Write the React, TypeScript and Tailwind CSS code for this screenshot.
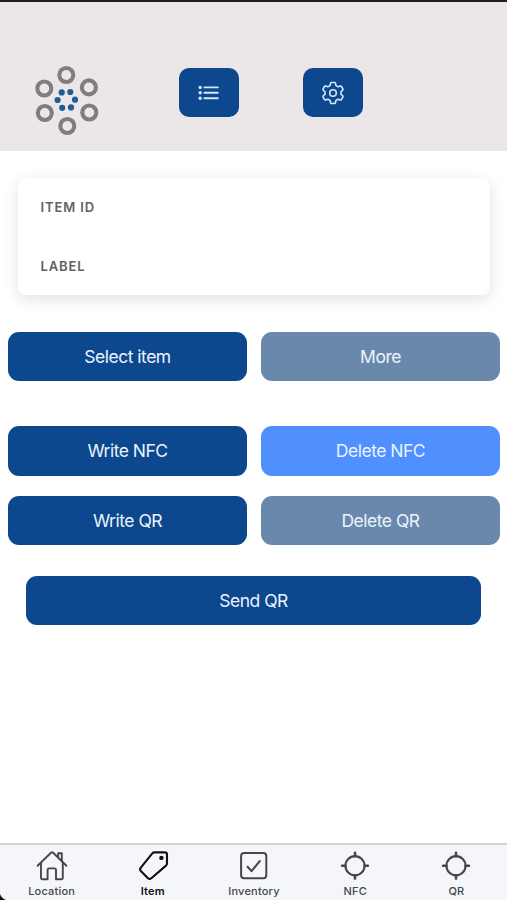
import React from "react";

const rings = [
  [66.3, 75],
  [88.9, 87.4],
  [89.3, 112.5],
  [67.3, 126],
  [44.8, 113],
  [44.3, 88.5],
];

const dots = [
  [61.7, 92.4],
  [70.3, 92],
  [75, 99.7],
  [71, 107.4],
  [62.2, 107.8],
  [57.6, 100],
];

// one tooth of the gear as [angle, radius], repeated every 60 degrees
const tooth = [
  [-20, 8.2],
  [-14, 10.2],
  [-9, 10.7],
  [9, 10.7],
  [14, 10.2],
  [20, 8.2],
  [30, 7.9],
];

const gearPoints = [0, 60, 120, 180, 240, 300]
  .flatMap((start) =>
    tooth.map(([angle, r]) => {
      const a = ((start + angle) * Math.PI) / 180;
      return `${(12 + r * Math.sin(a)).toFixed(2)},${(12 - r * Math.cos(a)).toFixed(2)}`;
    })
  )
  .join(" ");

function Logo() {
  return (
    <svg className="h-[72px] w-[66px]" viewBox="34 65 66 72" fill="none">
      {rings.map(([x, y]) => (
        <circle key={x} cx={x} cy={y} r="7" stroke="#7f7d7d" strokeWidth="4.1" />
      ))}
      {dots.map(([x, y]) => (
        <circle key={x} cx={x} cy={y} r="3.1" fill="#215c96" />
      ))}
    </svg>
  );
}

function ListIcon() {
  return (
    <svg className="h-4 w-[22px]" viewBox="0 0 22 16" fill="none" stroke="currentColor">
      <path d="M6.4 2.4h13.4M6.4 7.8h13.4M6.4 13.2h13.4" strokeWidth="1.9" strokeLinecap="round" />
      <g fill="currentColor" stroke="none">
        <circle cx="2.2" cy="2.4" r="1.7" />
        <circle cx="2.2" cy="7.8" r="1.7" />
        <circle cx="2.2" cy="13.2" r="1.7" />
      </g>
    </svg>
  );
}

function GearIcon() {
  return (
    <svg
      className="size-6"
      viewBox="0 0 24 24"
      fill="none"
      stroke="currentColor"
      strokeWidth="1.6"
      strokeLinejoin="round"
    >
      <polygon points={gearPoints} />
      <circle cx="12" cy="12" r="3.3" />
    </svg>
  );
}

function TabIcon({ children }: { children: React.ReactNode }) {
  return (
    <svg
      className="size-[34px]"
      viewBox="0 0 34 34"
      fill="none"
      stroke="currentColor"
      strokeWidth="1.9"
      strokeLinecap="round"
      strokeLinejoin="round"
    >
      {children}
    </svg>
  );
}

function HomeIcon() {
  return (
    <TabIcon>
      <path d="M2.6 16.8 16 3.8q1.1-1 2.2 0l13.2 13" />
      <path d="M23.2 8.4V4.3h3.6v8" />
      <path d="M6 13.9V29q0 1.2 1.2 1.2h5.4V21q0-1.6 1.6-1.6h5.2q1.6 0 1.6 1.6v9.2h5.6q1.2 0 1.2-1.2V13.9" />
    </TabIcon>
  );
}

function TagIcon() {
  return (
    <TabIcon>
      <path
        d="M18.4 3.4h10.4q2.2 0 2.2 2.2v8.6q0 1.4-1 2.4L15.3 29.2q-1.7 1.4-3.3 0l-7.2-7.2q-1.5-1.7 0-3.3L16.3 4.4q.9-1 2.1-1z"
        strokeWidth="2.1"
      />
      <circle cx="25.4" cy="8.9" r="2.2" fill="currentColor" stroke="none" />
    </TabIcon>
  );
}

function CheckIcon() {
  return (
    <TabIcon>
      <rect x="4.1" y="4.1" width="25.2" height="25.2" rx="3" strokeWidth="2" />
      <path d="m10.6 17.8 3.9 4.3 8.3-10" strokeWidth="2.1" />
    </TabIcon>
  );
}

function TargetIcon() {
  return (
    <TabIcon>
      <circle cx="17" cy="16.7" r="9.6" strokeWidth="2.1" />
      <path
        d="M17 3.8v3.4M17 26.2v3.4M4.1 16.7h3.4M26.5 16.7h3.4"
        strokeWidth="2.6"
      />
    </TabIcon>
  );
}

function HeaderButton({ children }: { children: React.ReactNode }) {
  return (
    <button className="flex h-[49px] w-[60px] items-center justify-center rounded-[10px] bg-[#0d478d] text-[#d3e7ff]">
      {children}
    </button>
  );
}

function Button({ text, className }: { text: string; className: string }) {
  return (
    <button
      className={`flex items-center justify-center rounded-[11px] pt-px text-[17.5px] tracking-[-0.5px] text-[#eaf4ff] ${className}`}
    >
      {text}
    </button>
  );
}

function Tab({
  text,
  icon,
  active,
}: {
  text: string;
  icon: React.ReactNode;
  active?: boolean;
}) {
  return (
    <div
      className={`flex flex-1 flex-col items-center pt-1 ${
        active ? "text-[#111114]" : "text-[#45474b]"
      }`}
    >
      {icon}
      <span
        className={`mt-px text-[11px] leading-[14px] tracking-[0.2px] ${
          active ? "font-semibold" : "font-medium"
        }`}
      >
        {text}
      </span>
    </div>
  );
}

export default function App() {
  return (
    <div className="relative flex h-[900px] w-[507px] flex-col overflow-hidden bg-white font-['Inter','Liberation_Sans',sans-serif]">
      <header className="flex h-[151px] shrink-0 items-start border-t-2 border-[#231f20] bg-[#ebe7e8] pl-[34px]">
        <div className="mt-[63px]">
          <Logo />
        </div>
        <div className="mt-[66px] ml-[79px] flex gap-16">
          <HeaderButton>
            <ListIcon />
          </HeaderButton>
          <HeaderButton>
            <GearIcon />
          </HeaderButton>
        </div>
      </header>

      <main className="flex-1">
        <section className="mr-[17px] ml-[18px] mt-[27px] h-[117px] rounded-lg bg-white px-[22.5px] pt-5 text-[13px] leading-[18px] font-semibold tracking-[0.9px] text-[#626262] shadow-[0_4px_16px_rgba(0,0,0,0.12)]">
          <div>ITEM ID</div>
          <div className="mt-[41px]">LABEL</div>
        </section>

        <div className="mt-[37px] grid grid-cols-2 gap-x-[14px] pr-[7px] pl-2">
          <Button text="Select item" className="h-[49px] bg-[#0d478d]" />
          <Button text="More" className="h-[49px] bg-[#6a88ab]" />
          <Button text="Write NFC" className="mt-[45px] h-[50px] bg-[#0d478d]" />
          <Button text="Delete NFC" className="mt-[45px] h-[50px] bg-[#508ffe]" />
          <Button text="Write QR" className="mt-5 h-[49px] bg-[#0d478d]" />
          <Button text="Delete QR" className="mt-5 h-[49px] bg-[#6a88ab]" />
        </div>
        <div className="mt-[31px] px-[26px]">
          <Button text="Send QR" className="h-[49px] w-full bg-[#0d478d]" />
        </div>
      </main>

      <nav className="flex h-[57px] shrink-0 border-t-2 border-[#d5d4d4] bg-[#f4f6fa] pl-px">
        <Tab text="Location" icon={<HomeIcon />} />
        <Tab text="Item" active icon={<TagIcon />} />
        <Tab text="Inventory" icon={<CheckIcon />} />
        <Tab text="NFC" icon={<TargetIcon />} />
        <Tab text="QR" icon={<TargetIcon />} />
      </nav>
      {/* rounded device corner */}
      <svg className="absolute bottom-0 left-0 size-[6px]" viewBox="0 0 6 6">
        <path d="M0 0Q1.5 4 6 6H0z" fill="#111" />
      </svg>
    </div>
  );
}
